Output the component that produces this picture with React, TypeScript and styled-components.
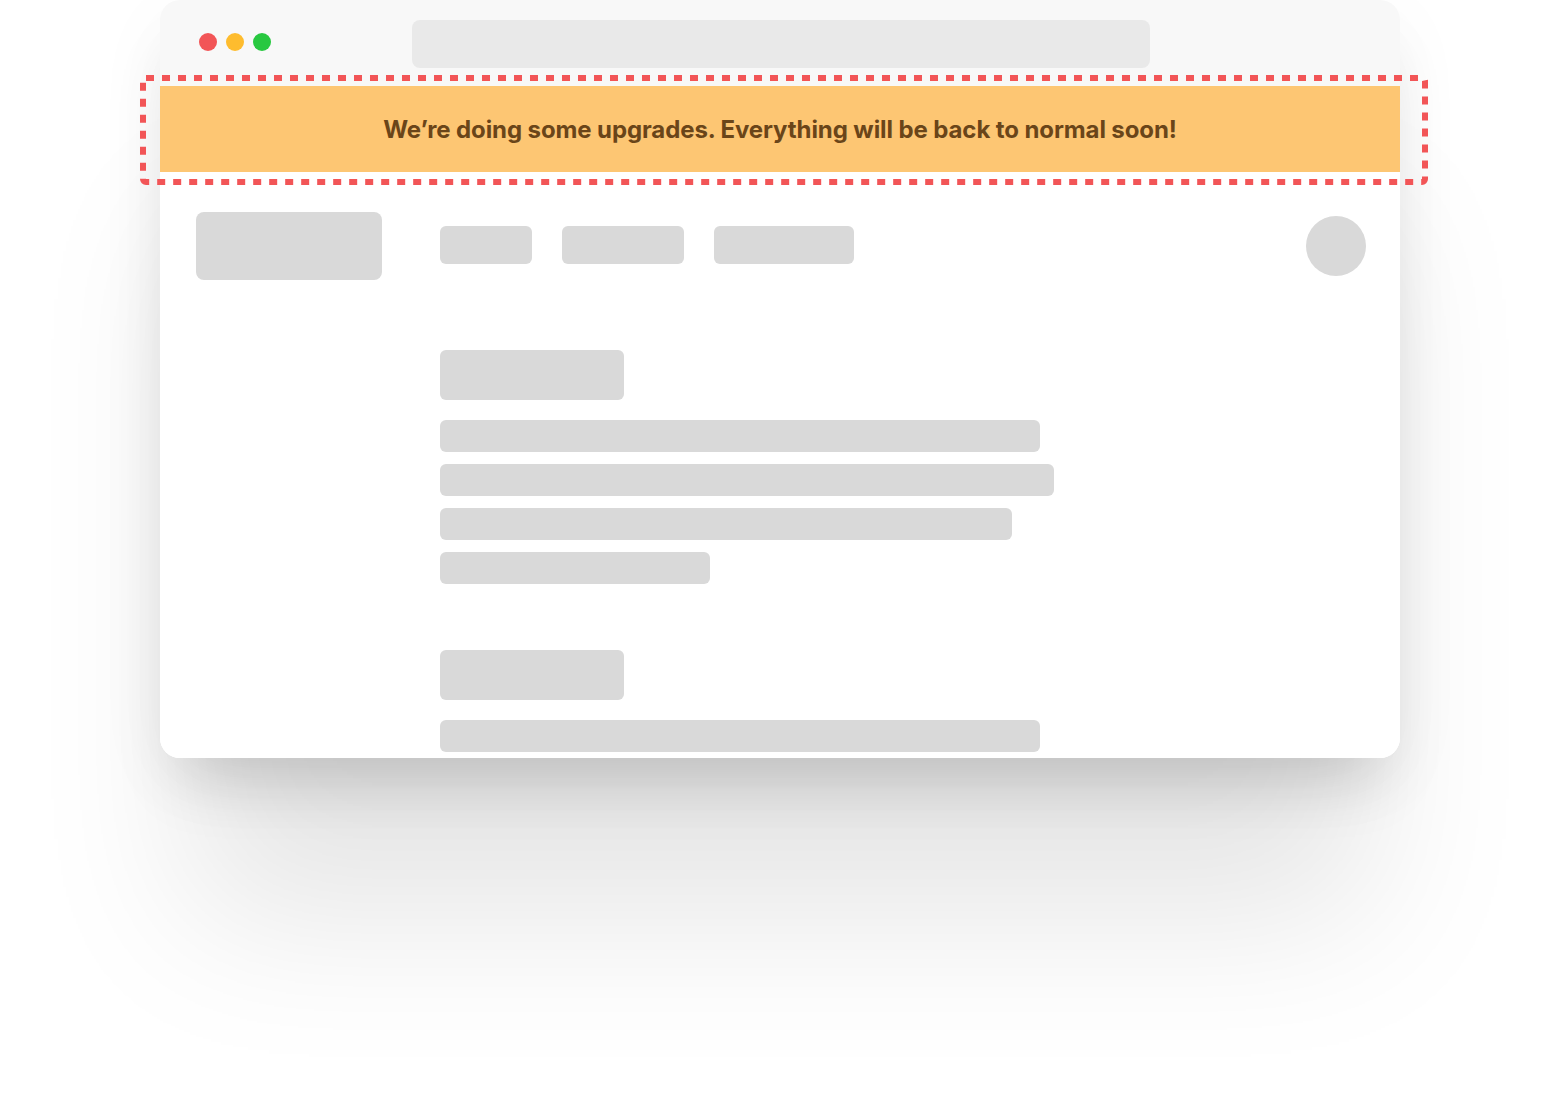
import React from "react";
import styled, { createGlobalStyle } from "styled-components";

const Global = createGlobalStyle`
  html, body { margin: 0; padding: 0; background: #ffffff; }
  body { font-family: Inter, "Noto Sans", sans-serif; }
`;

const Page = styled.div`
  width: 1560px;
  height: 1118px;
  display: flex;
  justify-content: center;
  align-items: flex-start;
  overflow: hidden;
`;

const Window = styled.div`
  width: 1240px;
  display: flex;
  flex-direction: column;
  border-radius: 20px;
  background: #ffffff;
  box-shadow: 0 40px 60px -20px rgba(0, 0, 0, 0.15),
    0 190px 150px -30px rgba(0, 0, 0, 0.1),
    0 20px 80px 0 rgba(0, 0, 0, 0.04);
`;

const TitleBar = styled.div`
  height: 86px;
  background: #f8f8f8;
  border-radius: 20px 20px 0 0;
  display: flex;
  align-items: flex-start;
  padding: 20px 0 0 39px;
  box-sizing: border-box;
`;

const Dots = styled.div`
  display: flex;
  gap: 9px;
  margin-top: 13px;
`;

const Dot = styled.span<{ $c: string }>`
  width: 18px;
  height: 18px;
  border-radius: 50%;
  background: ${(p) => p.$c};
`;

const UrlBar = styled.div`
  width: 738px;
  height: 48px;
  border-radius: 8px;
  background: #e9e9e9;
  margin-left: 141px;
`;

const BannerWrap = styled.div`
  position: relative;
`;

const Banner = styled.div`
  height: 86px;
  background: #fdc673;
  display: flex;
  align-items: center;
  justify-content: center;
  font-family: Inter, "Noto Sans", sans-serif;
  font-weight: 700;
  font-size: 24px;
  letter-spacing: -0.1px;
  color: #6a4519;
`;

const Highlight = styled.svg`
  position: absolute;
  left: -20px;
  top: -11px;
  width: 1288px;
  height: 110px;
  overflow: visible;
  pointer-events: none;
`;

const Body = styled.div`
  height: 586px;
  overflow: hidden;
  border-radius: 0 0 20px 20px;
  background: #ffffff;
  padding: 40px 34px 0 36px;
  box-sizing: border-box;
  display: flex;
  flex-direction: column;
`;

const Nav = styled.div`
  display: flex;
  align-items: center;
`;

const Skeleton = styled.div<{ $w: number; $h: number; $r?: number }>`
  width: ${(p) => p.$w}px;
  height: ${(p) => p.$h}px;
  border-radius: ${(p) => p.$r ?? 6}px;
  background: #d9d9d9;
  flex: none;
`;

const NavLinks = styled.div`
  display: flex;
  gap: 30px;
  margin-left: 58px;
  margin-top: -2px;
  flex: 1;
`;

const Content = styled.div`
  display: flex;
  flex-direction: column;
  padding-left: 244px;
  margin-top: 70px;
`;

const Section = styled.div`
  display: flex;
  flex-direction: column;
  gap: 20px;
  & + & {
    margin-top: 66px;
  }
`;

const Lines = styled.div`
  display: flex;
  flex-direction: column;
  gap: 12px;
`;

export default function App() {
  return (
    <Page>
      <Global />
      <Window>
        <TitleBar>
          <Dots>
            <Dot $c="#f25557" />
            <Dot $c="#febc2e" />
            <Dot $c="#28c840" />
          </Dots>
          <UrlBar />
        </TitleBar>
        <BannerWrap>
          <Banner>We’re doing some upgrades. Everything will be back to normal soon!</Banner>
          <Highlight viewBox="0 0 1288 110">
            <rect
              x="3"
              y="3"
              width="1282"
              height="104"
              rx="3"
              fill="none"
              stroke="#f25557"
              strokeWidth="6"
              strokeDasharray="8 8"
            />
          </Highlight>
        </BannerWrap>
        <Body>
          <Nav>
            <Skeleton $w={186} $h={68} $r={8} />
            <NavLinks>
              <Skeleton $w={92} $h={38} />
              <Skeleton $w={122} $h={38} />
              <Skeleton $w={140} $h={38} />
            </NavLinks>
            <Skeleton $w={60} $h={60} $r={30} />
          </Nav>
          <Content>
            <Section>
              <Skeleton $w={184} $h={50} />
              <Lines>
                <Skeleton $w={600} $h={32} />
                <Skeleton $w={614} $h={32} />
                <Skeleton $w={572} $h={32} />
                <Skeleton $w={270} $h={32} />
              </Lines>
            </Section>
            <Section>
              <Skeleton $w={184} $h={50} />
              <Lines>
                <Skeleton $w={600} $h={32} />
              </Lines>
            </Section>
          </Content>
        </Body>
      </Window>
    </Page>
  );
}
